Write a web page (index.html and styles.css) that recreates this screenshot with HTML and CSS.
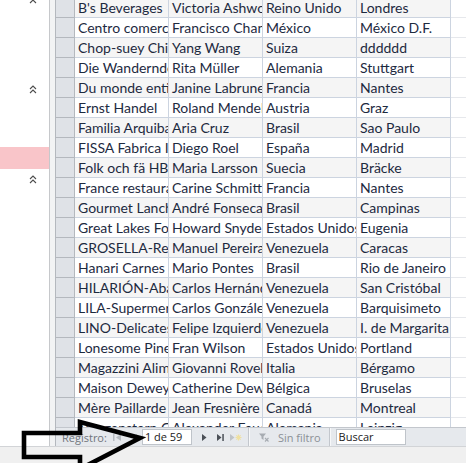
FILE: index.html
```html
<!DOCTYPE html>
<html lang="es">
<head>
<meta charset="utf-8">
<title>Clientes</title>
<link rel="stylesheet" href="styles.css">
</head>
<body>
<div class="app">
  <div class="main">
    <div class="leftpane">
      <svg class="chev chev-top" viewBox="0 0 8 9" width="8" height="9"><polyline points="1,4 4,1 7,4"/><polyline points="1,8 4,5 7,8"/></svg>
      <svg class="chev chev-mid" viewBox="0 0 8 9" width="8" height="9"><polyline points="1,4 4,1 7,4"/><polyline points="1,8 4,5 7,8"/></svg>
      <div class="pinkband"></div>
      <svg class="chev chev-low" viewBox="0 0 8 9" width="8" height="9"><polyline points="1,4 4,1 7,4"/><polyline points="1,8 4,5 7,8"/></svg>
    </div>
    <div class="splitter"></div>
    <div class="datasheet">
      <div class="grid">
        <div class="row alt"><div class="sel"></div><div class="c">B's Beverages</div><div class="c">Victoria Ashworth</div><div class="c">Reino Unido</div><div class="c">Londres</div><div class="fill"></div></div>
        <div class="row"><div class="sel"></div><div class="c">Centro comercial Moctezuma</div><div class="c">Francisco Chang</div><div class="c">México</div><div class="c">México D.F.</div><div class="fill"></div></div>
        <div class="row alt"><div class="sel"></div><div class="c">Chop-suey Chinese</div><div class="c">Yang Wang</div><div class="c">Suiza</div><div class="c">dddddd</div><div class="fill"></div></div>
        <div class="row"><div class="sel"></div><div class="c">Die Wandernde Kuh</div><div class="c">Rita Müller</div><div class="c">Alemania</div><div class="c">Stuttgart</div><div class="fill"></div></div>
        <div class="row alt"><div class="sel"></div><div class="c">Du monde entier</div><div class="c">Janine Labrune</div><div class="c">Francia</div><div class="c">Nantes</div><div class="fill"></div></div>
        <div class="row"><div class="sel"></div><div class="c">Ernst Handel</div><div class="c">Roland Mendel</div><div class="c">Austria</div><div class="c">Graz</div><div class="fill"></div></div>
        <div class="row alt"><div class="sel"></div><div class="c">Familia Arquibaldo</div><div class="c">Aria Cruz</div><div class="c">Brasil</div><div class="c">Sao Paulo</div><div class="fill"></div></div>
        <div class="row"><div class="sel"></div><div class="c">FISSA Fabrica Inter. Salchichas S.A.</div><div class="c">Diego Roel</div><div class="c">España</div><div class="c">Madrid</div><div class="fill"></div></div>
        <div class="row alt"><div class="sel"></div><div class="c">Folk och fä HB</div><div class="c">Maria Larsson</div><div class="c">Suecia</div><div class="c">Bräcke</div><div class="fill"></div></div>
        <div class="row"><div class="sel"></div><div class="c">France restauration</div><div class="c">Carine Schmitt</div><div class="c">Francia</div><div class="c">Nantes</div><div class="fill"></div></div>
        <div class="row alt"><div class="sel"></div><div class="c">Gourmet Lanchonetes</div><div class="c">André Fonseca</div><div class="c">Brasil</div><div class="c">Campinas</div><div class="fill"></div></div>
        <div class="row"><div class="sel"></div><div class="c">Great Lakes Food Market</div><div class="c">Howard Snyder</div><div class="c">Estados Unidos</div><div class="c">Eugenia</div><div class="fill"></div></div>
        <div class="row alt"><div class="sel"></div><div class="c">GROSELLA-Restaurante</div><div class="c">Manuel Pereira</div><div class="c">Venezuela</div><div class="c">Caracas</div><div class="fill"></div></div>
        <div class="row"><div class="sel"></div><div class="c">Hanari Carnes</div><div class="c">Mario Pontes</div><div class="c">Brasil</div><div class="c">Rio de Janeiro</div><div class="fill"></div></div>
        <div class="row alt"><div class="sel"></div><div class="c">HILARIÓN-Abastos</div><div class="c">Carlos Hernández</div><div class="c">Venezuela</div><div class="c">San Cristóbal</div><div class="fill"></div></div>
        <div class="row"><div class="sel"></div><div class="c">LILA-Supermercado</div><div class="c">Carlos González</div><div class="c">Venezuela</div><div class="c">Barquisimeto</div><div class="fill"></div></div>
        <div class="row alt"><div class="sel"></div><div class="c">LINO-Delicateses</div><div class="c">Felipe Izquierdo</div><div class="c">Venezuela</div><div class="c">I. de Margarita</div><div class="fill"></div></div>
        <div class="row"><div class="sel"></div><div class="c">Lonesome Pine Restaurant</div><div class="c">Fran Wilson</div><div class="c">Estados Unidos</div><div class="c">Portland</div><div class="fill"></div></div>
        <div class="row alt"><div class="sel"></div><div class="c">Magazzini Alimentari Riuniti</div><div class="c">Giovanni Rovelli</div><div class="c">Italia</div><div class="c">Bérgamo</div><div class="fill"></div></div>
        <div class="row"><div class="sel"></div><div class="c">Maison Dewey</div><div class="c">Catherine Dewey</div><div class="c">Bélgica</div><div class="c">Bruselas</div><div class="fill"></div></div>
        <div class="row alt"><div class="sel"></div><div class="c">Mère Paillarde</div><div class="c">Jean Fresnière</div><div class="c">Canadá</div><div class="c">Montreal</div><div class="fill"></div></div>
        <div class="row"><div class="sel"></div><div class="c">Morgenstern Gesundkost</div><div class="c">Alexander Feuer</div><div class="c">Alemania</div><div class="c">Leipzig</div><div class="fill"></div></div>
      </div>
      <div class="navbar">
        <span class="nav-label">Registro:</span>
        <svg class="nb nb-first" viewBox="0 0 9 9" width="9" height="9"><rect x="0" y="1" width="1.5" height="7"/><polygon points="8,1 3,4.5 8,8"/></svg>
        <svg class="nb nb-prev" viewBox="0 0 5 9" width="5" height="9"><polygon points="5,1 0.5,4.5 5,8"/></svg>
        <div class="navbox">1 de 59</div>
        <svg class="nb nb-next" viewBox="0 0 5 9" width="5" height="9"><polygon points="0,1 4.5,4.5 0,8"/></svg>
        <svg class="nb nb-last" viewBox="0 0 7 9" width="7" height="9"><polygon points="0,1 4.5,4.5 0,8"/><rect x="5.3" y="1" width="1.5" height="7"/></svg>
        <svg class="nb nb-new" viewBox="0 0 12 9" width="12" height="9"><polygon class="gr" points="0,1 4.5,4.5 0,8"/><path class="star" d="M8.5 1.5v6M5.5 4.5h6M6.4 2.4l4.2 4.2M10.6 2.4l-4.2 4.2"/></svg>
        <span class="sep"></span>
        <svg class="nb nb-filter" viewBox="0 0 10 9" width="10" height="9"><polygon points="0,0.5 7,0.5 4.5,3.5 4.5,7 2.5,5.5 2.5,3.5"/><path class="x" d="M6 5l3.5 3.5M9.5 5L6 8.5"/></svg>
        <span class="nav-label nav-filter">Sin filtro</span>
        <span class="sep sep2"></span>
        <div class="navbox search">Buscar</div>
      </div>
    </div>
  </div>
  <div class="statusbar"></div>
  <svg class="arrow" viewBox="0 0 466 463" width="466" height="463"><polygon points="24,433 80,433 80,422 140,438 80,469 80,457 24,457"/></svg>
</div>
</body>
</html>
```
FILE: styles.css
```css
html, body {
  margin: 0;
  padding: 0;
  background: #ffffff;
}

.app {
  position: relative;
  width: 466px;
  height: 463px;
  overflow: hidden;
  display: flex;
  flex-direction: column;
}

.main {
  display: flex;
  height: 446px;
  flex: none;
}

.leftpane {
  width: 49px;
  flex: none;
  background: #ffffff;
  border-right: 1px solid #c6c8cb;
  display: flex;
  flex-direction: column;
  overflow: hidden;
}

.chev {
  display: block;
  flex: none;
  margin-left: 29px;
  fill: none;
  stroke: #4d4d4d;
  stroke-width: 1.1;
}

.chev-top { margin-top: -5px; }
.chev-mid { margin-top: 81px; }
.chev-low { margin-top: 6px; }

.pinkband {
  flex: none;
  height: 22px;
  margin-top: 53px;
  background: #f9c5c9;
}

.splitter {
  width: 5px;
  flex: none;
  background: #f2f3f4;
  border-right: 1px solid #b4b8be;
}

.datasheet {
  flex: 1;
  min-width: 0;
  display: flex;
  flex-direction: column;
}

.grid {
  flex: 1;
  overflow: hidden;
  background: #ffffff;
}

.row {
  display: flex;
  height: 20px;
  font-family: Lato, "Liberation Sans", sans-serif;
  font-size: 14px;
  line-height: 19px;
  color: #1d2a3f;
}

.row:first-child { margin-top: -2px; }

.sel {
  box-sizing: border-box;
  width: 19px;
  flex: none;
  background: #dfe2e7;
  border-right: 1px solid #b4b8be;
  border-bottom: 1px solid #b4b8be;
}

.c {
  box-sizing: border-box;
  width: 94px;
  flex: none;
  padding-left: 3px;
  white-space: nowrap;
  overflow: hidden;
  border-right: 1px solid #ccd4e0;
  border-bottom: 1px solid #ccd4e0;
}

.row.alt .c { background: #f5f5f5; }

.fill {
  flex: 1;
  box-sizing: border-box;
  border-bottom: 1px solid #e6e8ec;
}

.navbar {
  flex: none;
  height: 18px;
  border-top: 1px solid #c3c7cd;
  background: #e6e9ed;
  display: flex;
  align-items: center;
  font-family: "Open Sans", "Noto Sans", sans-serif;
  font-size: 11px;
}

.nav-label {
  margin-left: 6px;
  color: #6f747b;
  white-space: nowrap;
}

.nb { display: block; flex: none; fill: #4b5057; }
.nb-first { margin-left: 6px; fill: #b7bcc2; }
.nb-prev { margin-left: 10px; fill: #b7bcc2; }
.nb-next { margin-left: 10px; }
.nb-last { margin-left: 10px; }
.nb-new { margin-left: 6px; }
.nb-new .gr { fill: #bfc3c8; }
.nb-new .star { stroke: #efe0a0; stroke-width: 1.2; fill: none; }
.nb-filter { margin-left: 9px; fill: #a7acb2; }
.nb-filter .x { stroke: #a7acb2; stroke-width: 1.1; fill: none; }

.navbox {
  box-sizing: border-box;
  flex: none;
  width: 50px;
  height: 16px;
  margin-left: 5px;
  padding-left: 2px;
  background: #ffffff;
  border: 1px solid #bfc4ca;
  color: #1a1a1a;
  line-height: 14px;
  white-space: nowrap;
}

.navbox.search {
  width: 70px;
  margin-left: 5px;
}

.sep {
  flex: none;
  align-self: stretch;
  width: 1px;
  margin-left: 6px;
  background: #c3c7cd;
  border-right: 1px solid #f7f8f9;
}

.nav-filter {
  margin-left: 9px;
  color: #8b9096;
}

.sep2 { margin-left: 8px; }

.statusbar {
  flex: 1;
  background: #f0f0f0;
  border-top: 1px solid #d2d4d7;
}

.arrow {
  position: absolute;
  left: 0;
  top: 0;
  pointer-events: none;
  fill: none;
  stroke: #000000;
  stroke-width: 4.6;
  stroke-linejoin: miter;
}
```
